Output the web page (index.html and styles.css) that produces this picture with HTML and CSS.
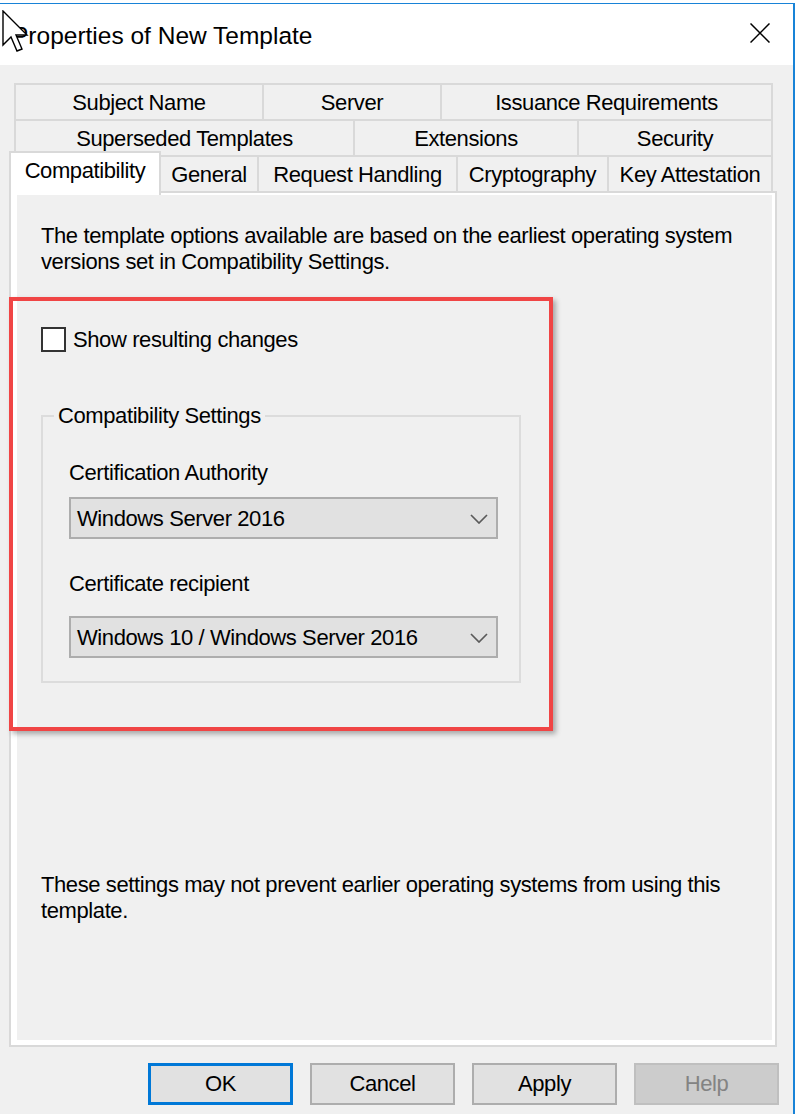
FILE: index.html
```html
<!DOCTYPE html>
<html lang="en">
<head>
<meta charset="utf-8">
<title>Properties of New Template</title>
<link rel="stylesheet" href="styles.css">
</head>
<body>
<div class="window">
  <div class="titlebar">
    <span class="title">Properties of New Template</span>
    <svg class="close" width="20" height="20" viewBox="0 0 20 20" aria-label="Close">
      <path d="M0.5 0.5 L19.5 19.5 M19.5 0.5 L0.5 19.5" stroke="#000" stroke-width="1.5" fill="none"/>
    </svg>
  </div>
  <div class="client">
    <div class="tabrow row1">
      <div class="tab t-subject">Subject Name</div>
      <div class="tab t-server">Server</div>
      <div class="tab t-issuance">Issuance Requirements</div>
    </div>
    <div class="tabrow row2">
      <div class="tab t-superseded">Superseded Templates</div>
      <div class="tab t-extensions">Extensions</div>
      <div class="tab t-security">Security</div>
    </div>
    <div class="tabrow row3">
      <div class="tab tab-selected">Compatibility</div>
      <div class="tab t-general">General</div>
      <div class="tab t-request">Request Handling</div>
      <div class="tab t-crypto">Cryptography</div>
      <div class="tab t-key">Key Attestation</div>
    </div>
    <div class="panel">
      <div class="page">
        <p class="intro">The template options available are based on the earliest operating system versions set in Compatibility Settings.</p>
        <label class="check"><span class="checkbox"></span><span>Show resulting changes</span></label>
        <fieldset class="group">
          <legend>Compatibility Settings</legend>
          <div class="field-label">Certification Authority</div>
          <div class="combo">
            <span>Windows Server 2016</span>
            <svg class="chev" width="18" height="10" viewBox="0 0 18 10"><polyline points="1,1 9,9 17,1" fill="none" stroke="#5a5a5a" stroke-width="1.7"/></svg>
          </div>
          <div class="field-label second">Certificate recipient</div>
          <div class="combo combo-tight">
            <span>Windows 10 / Windows Server 2016</span>
            <svg class="chev" width="18" height="10" viewBox="0 0 18 10"><polyline points="1,1 9,9 17,1" fill="none" stroke="#5a5a5a" stroke-width="1.7"/></svg>
          </div>
        </fieldset>
        <p class="note">These settings may not prevent earlier operating systems from using this template.</p>
      </div>
    </div>
    <div class="buttons">
      <button class="btn btn-default">OK</button>
      <button class="btn">Cancel</button>
      <button class="btn">Apply</button>
      <button class="btn btn-disabled" disabled>Help</button>
    </div>
  </div>
</div>
<div class="highlight"></div>
<svg class="cursor" width="27" height="44" viewBox="0 0 27 44">
  <path d="M1 1 L1 35 L9 27 L15 41 L20 39 L14 25 L25 25 Z" fill="#fff" stroke="#000" stroke-width="1.4" stroke-linejoin="miter"/>
</svg>
</body>
</html>
```

FILE: styles.css
```css
html, body {
  margin: 0;
  padding: 0;
}

body {
  width: 798px;
  height: 1114px;
  overflow: hidden;
  background: #ffffff;
  font-family: "Liberation Sans", Arial, sans-serif;
  font-size: 22px;
  letter-spacing: -0.4px;
  color: #000;
  position: relative;
}

.window {
  box-sizing: border-box;
  margin-top: 3px;
  width: 795px;
  height: 1111px;
  border-top: 1px solid #1883d7;
  border-right: 2px solid #1883d7;
  display: flex;
  flex-direction: column;
  overflow: hidden;
}

.titlebar {
  height: 61px;
  background: #ffffff;
  display: flex;
  align-items: flex-start;
  justify-content: space-between;
  flex-shrink: 0;
}

.title {
  font-size: 24.5px;
  letter-spacing: 0;
  line-height: 28px;
  padding-top: 18px;
  padding-left: 12px;
  color: #000;
}

.close {
  margin-top: 19px;
  margin-right: 23px;
}

.client {
  flex: 1;
  background: #f0f0f0;
  padding-top: 18px;
}

.tabrow {
  display: flex;
  align-items: flex-start;
  height: 38px;
}

.row1, .row2 {
  margin-left: 14px;
}

.row2, .row3 {
  margin-top: -2px;
}

.row3 {
  margin-left: 9px;
}

.tab {
  box-sizing: border-box;
  height: 38px;
  border: 2px solid #d9d9d9;
  background: #f0f0f0;
  display: flex;
  align-items: center;
  justify-content: center;
  margin-left: -2px;
  white-space: nowrap;
  line-height: 26px;
  padding-top: 2px;
}

.tab:first-child {
  margin-left: 0;
}

.t-subject { width: 250px; }
.t-server { width: 180px; }
.t-issuance { width: 333px; }
.t-superseded { width: 341px; }
.t-extensions { width: 226px; }
.t-security { width: 196px; }
.t-general { width: 100px; }
.t-request { width: 201px; }
.t-crypto { width: 153px; }
.t-key { width: 166px; }

.tab-selected {
  position: relative;
  z-index: 1;
  width: 152px;
  height: 44px;
  margin-top: -4px;
  margin-bottom: -6px;
  padding-top: 0;
  padding-bottom: 6px;
  border-bottom: none;
  background: #ffffff;
}

.panel {
  box-sizing: border-box;
  margin-top: -2px;
  margin-left: 9px;
  width: 768px;
  border: 2px solid #d9d9d9;
  background: #ffffff;
  padding: 2px 3px 5px 6px;
}

.page {
  box-sizing: border-box;
  height: 845px;
  background: #f0f0f0;
  padding: 28px 24px 0 24px;
  display: flex;
  flex-direction: column;
  align-items: flex-start;
}

.intro, .note {
  margin: 0;
  line-height: 26px;
}

.check {
  margin-top: 52px;
  height: 25px;
  display: flex;
  align-items: center;
  gap: 7px;
  line-height: 26px;
}

.checkbox {
  box-sizing: border-box;
  width: 25px;
  height: 25px;
  border: 2px solid #333333;
  background: #ffffff;
  flex-shrink: 0;
}

.group {
  box-sizing: border-box;
  margin: 51px 0 0 0;
  width: 480px;
  min-width: 0;
  border: 2px solid #dcdcdc;
  padding: 31px 0 23px 26px;
}

.group legend {
  margin-left: -15px;
  padding: 0 4px;
  line-height: 26px;
}

.field-label {
  line-height: 26px;
}

.field-label.second {
  margin-top: 32px;
}

.combo {
  box-sizing: border-box;
  margin-top: 11px;
  width: 429px;
  height: 42px;
  border: 2px solid #adadad;
  background: #e1e1e1;
  display: flex;
  align-items: center;
  justify-content: space-between;
  padding: 1px 8px 0 6px;
  line-height: 26px;
}

.combo-tight {
  margin-top: 19px;
}

.chev {
  margin-top: 1px;
}

.note {
  margin-top: 189px;
}

.buttons {
  display: flex;
  gap: 17px;
  margin-top: 16px;
  padding-left: 148px;
}

.btn {
  box-sizing: border-box;
  width: 145px;
  height: 42px;
  border: 2px solid #adadad;
  background: #e1e1e1;
  font-family: "Liberation Sans", Arial, sans-serif;
  font-size: 22px;
  letter-spacing: -0.4px;
  color: #000;
  padding: 0;
  margin: 0;
}

.btn-default {
  border: 3px solid #0078d7;
}

.btn-disabled {
  background: #cccccc;
  border-color: #bfbfbf;
  color: #838383;
}

.highlight {
  position: absolute;
  left: 9px;
  top: 297px;
  width: 544px;
  height: 434px;
  box-sizing: border-box;
  border: 4px solid #f04545;
  box-shadow: 3px 3px 5px rgba(0, 0, 0, 0.3);
  pointer-events: none;
}

.cursor {
  position: absolute;
  left: 2px;
  top: 10px;
}
```
